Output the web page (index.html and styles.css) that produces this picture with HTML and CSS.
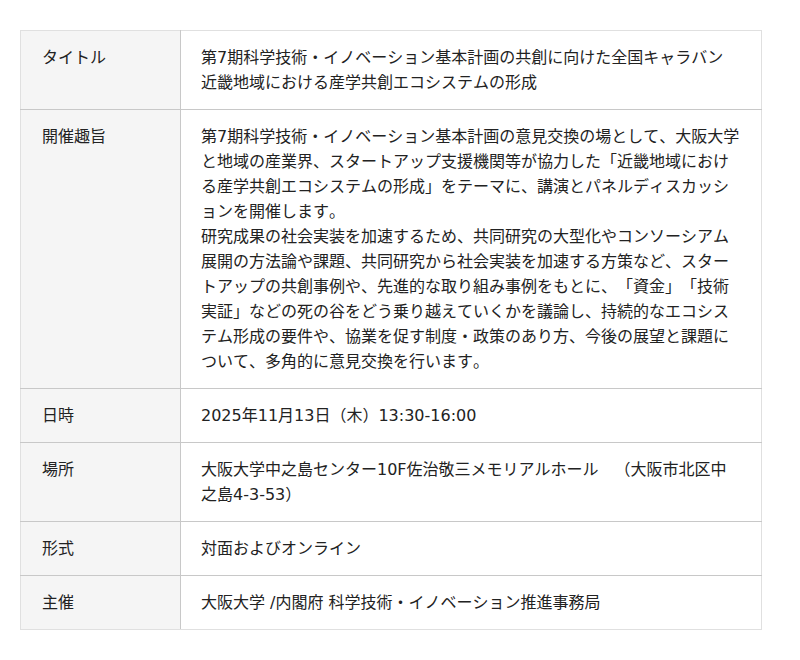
FILE: index.html
```html
<!DOCTYPE html>
<html lang="ja">
<head>
<meta charset="utf-8">
<link rel="stylesheet" href="styles.css">
</head>
<body>
<table class="info">
<tr><th>タイトル</th><td>第7期科学技術・イノベーション基本計画の共創に向けた全国キャラバン<br>近畿地域における産学共創エコシステムの形成</td></tr>
<tr><th>開催趣旨</th><td>第7期科学技術・イノベーション基本計画の意見交換の場として、大阪大学と地域の産業界、スタートアップ支援機関等が協力した「近畿地域における産学共創エコシステムの形成」をテーマに、講演とパネルディスカッションを開催します。<br>研究成果の社会実装を加速するため、共同研究の大型化やコンソーシアム展開の方法論や課題、共同研究から社会実装を加速する方策など、スタートアップの共創事例や、先進的な取り組み事例をもとに、「資金」「技術実証」などの死の谷をどう乗り越えていくかを議論し、持続的なエコシステム形成の要件や、協業を促す制度・政策のあり方、今後の展望と課題について、多角的に意見交換を行います。</td></tr>
<tr><th>日時</th><td>2025年11月13日（木）13:30-16:00</td></tr>
<tr><th>場所</th><td>大阪大学中之島センター10F佐治敬三メモリアルホール　（大阪市北区中之島4-3-53）</td></tr>
<tr><th>形式</th><td>対面およびオンライン</td></tr>
<tr><th>主催</th><td>大阪大学 /内閣府 科学技術・イノベーション推進事務局</td></tr>
</table>
</body>
</html>
```
FILE: styles.css
```css
html, body {
  margin: 0;
  padding: 0;
  background: #fff;
}
body {
  padding: 30px 20px;
  font-family: "DejaVu Sans", "Noto Sans CJK JP", sans-serif;
  font-size: 16px;
  line-height: 25px;
  color: #222;
  text-spacing-trim: space-all;
  font-kerning: none;
}
.info {
  width: 742px;
  border-collapse: collapse;
  border: 1px solid #e0e0e0;
}
.info th, .info td {
  text-align: left;
  vertical-align: top;
  font-weight: normal;
  padding: 14px 20px;
  border-top: 1px solid #c8c8c8;
  border-bottom: 1px solid #c8c8c8;
}
.info tr:first-child th, .info tr:first-child td {
  border-top-color: #e0e0e0;
}
.info tr:last-child th, .info tr:last-child td {
  border-bottom-color: #e0e0e0;
}
.info th {
  width: 118px;
  padding-left: 21px;
  background: #f5f5f5;
  border-right: 1px solid #c8c8c8;
}
```
